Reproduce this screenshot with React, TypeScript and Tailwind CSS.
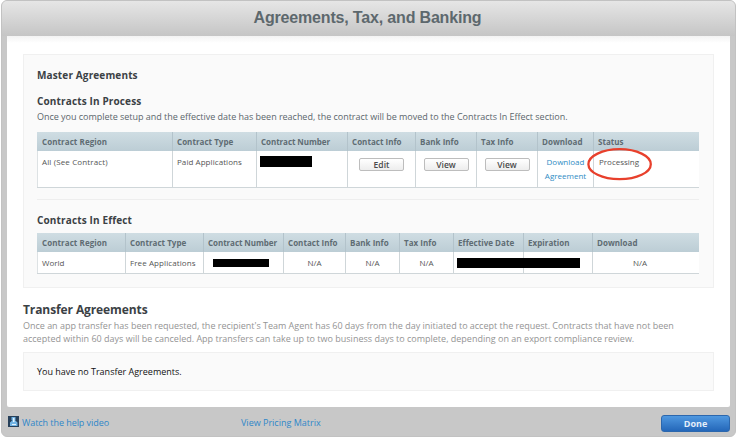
import type { ReactNode } from "react";

function Heading({ children }: { children: ReactNode }) {
  return <h2 className="h-[14px] text-[10px] leading-[14px] font-bold tracking-[0.14px] text-[#3b4145]">{children}</h2>;
}

function HeadCell({ children, last = false, className = "pl-[4px]" }: { children: ReactNode; last?: boolean; className?: string }) {
  return <div className={`${last ? "" : "border-r border-[#b3c3cb]"} ${className}`}>{children}</div>;
}

function Cell({ children, last = false, className = "" }: { children?: ReactNode; last?: boolean; className?: string }) {
  return <div className={`${last ? "" : "border-r border-[#cfd6d9]"} ${className}`}>{children}</div>;
}

function SmallButton({ children }: { children: ReactNode }) {
  return (
    <button className="h-[13px] w-[45px] rounded-[2px] border border-[#bdbdbd] bg-linear-to-b from-white to-[#ededed] text-[8.5px] leading-[11px] font-semibold text-[#4a4a4a]">
      {children}
    </button>
  );
}

const headRow = "h-[19px] bg-linear-to-b from-[#cfdde3] to-[#bccdd5] text-[8px] leading-[19px] font-bold tracking-[0.03px] text-[#5f6c73]";
const process = "grid grid-cols-[136px_84px_91px_68px_61px_61px_56px_105px]";
const effect = "grid grid-cols-[89px_78px_80px_62px_54px_54px_70px_69px_106px]";

export default function App() {
  return (
    <div className="flex h-[437px] w-[736px] flex-col overflow-hidden bg-white pl-px font-['Open_Sans','Noto_Sans',sans-serif] whitespace-nowrap">
      <div className="flex h-[437px] w-[735px] flex-col overflow-hidden rounded-[6px] border border-[#c2c2c2] bg-[#c8c8c8]">
        <header className="h-[35px] shrink-0 bg-linear-to-b from-[#e6e6e6] to-[#c5c5c5] text-center">
          <h1 className="pt-[7px] pr-[2px] font-['Liberation_Sans',Arial,sans-serif] text-[16px] leading-[20px] font-bold tracking-[-0.17px] text-[#5d686d]">
            Agreements, Tax, and Banking
          </h1>
        </header>
        <main className="mr-[5px] ml-[5px] h-[371px] shrink-0 rounded-b-[2px] bg-linear-to-b from-[#f3f3f3] to-white to-[7px] px-[16px] pt-[18px]">
          <section className="h-[234px] w-[691px] border border-[#f0f0f0] bg-[#fafafa] px-[13px] pt-[13px]">
            <Heading>Master Agreements</Heading>
            <div className="pt-[12px]">
              <Heading>Contracts In Process</Heading>
            </div>
            <p className="mt-[3px] h-[12px] text-[9px] leading-[12px] tracking-[-0.027px] text-[#5b666c]">
              Once you complete setup and the effective date has been reached, the contract will be moved to the Contracts In Effect section.
            </p>
            <div className="mt-[9px] h-[56px] w-[662px] border-b border-[#cfd6d9] bg-white">
              <div className={`${process} ${headRow}`}>
                <HeadCell className="pl-[5px] tracking-[0.07px]">Contract Region</HeadCell>
                <HeadCell>Contract Type</HeadCell>
                <HeadCell className="pl-[4px] tracking-[-0.06px]">Contract Number</HeadCell>
                <HeadCell>Contact Info</HeadCell>
                <HeadCell>Bank Info</HeadCell>
                <HeadCell>Tax Info</HeadCell>
                <HeadCell>Download</HeadCell>
                <HeadCell last>Status</HeadCell>
              </div>
              <div className={`${process} h-[36px] text-[8px] leading-[14px] text-[#555]`}>
                <Cell className="border-l border-l-[#dde2e4] pt-[4px] pl-[4px] tracking-[0.13px]">All (See Contract)</Cell>
                <Cell className="pt-[4px] pl-[4px] tracking-[0.06px]">Paid Applications</Cell>
                <Cell className="pt-[5px] pl-[3px]">
                  <div className="h-[11px] w-[52px] bg-black" />
                </Cell>
                <Cell className="flex justify-center pt-[7px]"><SmallButton>Edit</SmallButton></Cell>
                <Cell className="flex justify-center pt-[7px]"><SmallButton>View</SmallButton></Cell>
                <Cell className="flex justify-center pt-[7px]"><SmallButton>View</SmallButton></Cell>
                <Cell className="pt-[4px] text-center text-[#2f8cc4]">
                  <div>Download</div>
                  <div>Agreement</div>
                </Cell>
                <Cell last className="relative pt-[4px] pl-[5px]">
                  Processing
                  <svg className="absolute -top-[4px] -left-[7px]" width="66" height="34" viewBox="0 0 66 34" fill="none">
                    <ellipse cx="32.6" cy="17.2" rx="31.2" ry="15" stroke="#e8402c" strokeWidth="2.3" />
                  </svg>
                </Cell>
              </div>
            </div>
            <div className="mt-[11px] w-[662px] border-t border-[#eeeeee]" />
            <div className="pt-[13px]">
              <Heading>Contracts In Effect</Heading>
            </div>
            <div className="mt-[6px] h-[41px] w-[662px] border-b border-[#cfd6d9] bg-white">
              <div className={`${effect} ${headRow}`}>
                <HeadCell className="pl-[5px] tracking-[0.07px]">Contract Region</HeadCell>
                <HeadCell>Contract Type</HeadCell>
                <HeadCell className="pl-[4px] tracking-[-0.06px]">Contract Number</HeadCell>
                <HeadCell>Contact Info</HeadCell>
                <HeadCell>Bank Info</HeadCell>
                <HeadCell>Tax Info</HeadCell>
                <HeadCell>Effective Date</HeadCell>
                <HeadCell>Expiration</HeadCell>
                <HeadCell last>Download</HeadCell>
              </div>
              <div className={`${effect} h-[21px] text-[8px] leading-[21px] text-[#555]`}>
                <Cell className="border-l border-l-[#dde2e4] pl-[4px]">World</Cell>
                <Cell className="pl-[4px] tracking-[0.09px]">Free Applications</Cell>
                <Cell className="pt-[7px] pl-[9px]">
                  <div className="h-[8px] w-[56px] bg-black" />
                </Cell>
                <Cell className="text-center">N/A</Cell>
                <Cell className="text-center">N/A</Cell>
                <Cell className="text-center">N/A</Cell>
                <Cell className="pt-[6px] pl-[3px]">
                  <div className="relative h-[10px] w-[123px] bg-black" />
                </Cell>
                <Cell />
                <Cell last className="pr-[12px] text-center">N/A</Cell>
              </div>
            </div>
          </section>
          <section className="pt-[14px]">
            <h2 className="h-[16px] text-[12px] leading-[16px] font-bold tracking-[-0.1px] text-[#3b4145]">Transfer Agreements</h2>
            <p className="mt-[1px] h-[26px] text-[9px] leading-[13px] text-[#949494]">
              <span className="tracking-[-0.017px]">
                Once an app transfer has been requested, the recipient's Team Agent has 60 days from the day initiated to accept the request. Contracts that have not been
              </span>
              <br />
              accepted within 60 days will be canceled. App transfers can take up to two business days to complete, depending on an export compliance review.
            </p>
            <div className="mt-[7px] h-[39px] w-[691px] border border-[#f0f0f0] bg-[#fafafa] pl-[13px] text-[9px] leading-[38px] text-[#111]">
              You have no Transfer Agreements.
            </div>
          </section>
        </main>
        <footer className="flex h-[29px] shrink-0 items-start pt-[8px] pl-[6px] text-[9px] leading-[15px] text-[#2f87c8]">
          <svg className="mt-[1px] shrink-0" width="11" height="11" viewBox="0 0 11 11">
            <rect width="11" height="11" fill="#27405a" />
            <path d="M3.500 1h4v3.200H7L9.500 6.500V10H2V6.500L4.500 4.200h-1z" fill="#72b5e6" />
            <path d="M5 2h1.500v4H5zM4 8h4v1H4z" fill="#e3f2fc" />
          </svg>
          <a className="ml-[3px] w-[219px] tracking-[-0.06px]">Watch the help video</a>
          <a className="w-[420px]">View Pricing Matrix</a>
          <button className="h-[17px] w-[69px] rounded-[3px] border border-[#2c67ad] bg-linear-to-b from-[#4f98e0] to-[#2467b9] text-[9px] leading-[15px] font-bold text-[#e4eefa]">
            Done
          </button>
        </footer>
      </div>
    </div>
  );
}
